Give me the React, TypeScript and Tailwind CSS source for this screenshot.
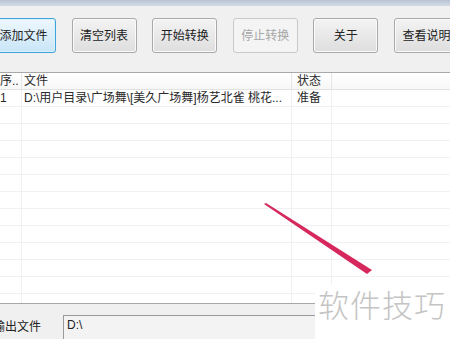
import React from "react";

const font = { fontFamily: '"Liberation Sans", "Noto Sans CJK SC", sans-serif' };

type ToolButtonProps = {
  label: string;
  variant?: "focus" | "normal" | "disabled";
};

function ToolButton({ label, variant = "normal" }: ToolButtonProps) {
  const base =
    "flex h-[35px] w-[65px] shrink-0 items-center justify-center rounded-[3px] border text-[12px]";
  if (variant === "focus") {
    return (
      <div className={`${base} border-[#3fa4d8] bg-gradient-to-b from-[#eef7fd] to-[#c9e6f8] text-[#222] shadow-[inset_0_0_0_1px_#d8f0fc]`}>
        {label}
      </div>
    );
  }
  if (variant === "disabled") {
    return (
      <div className={`${base} border-[#c9c9c9] bg-[#f4f4f4] text-[#a6a6a6]`}>{label}</div>
    );
  }
  return (
    <div className={`${base} border-[#a9a9a9] bg-gradient-to-b from-[#f3f3f3] to-[#dedede] text-[#222] shadow-[inset_0_0_0_1px_#fafafa]`}>
      {label}
    </div>
  );
}

const rows = Array.from({ length: 13 }, (_, i) => i);

export default function App() {
  return (
    <div className="relative flex h-[339px] w-[450px] flex-col overflow-hidden bg-[#f0f0f0]" style={font}>
      <div className="h-[6px] shrink-0 bg-gradient-to-b from-[#b8c4d3] to-[#d3dae4]" />

      {/* toolbar */}
      <div className="flex h-[66px] shrink-0 gap-[15.6px] pl-0 pt-[12px]">
        <div className="ml-[-9px] flex gap-[15.6px]">
          <ToolButton label="添加文件" variant="focus" />
          <ToolButton label="清空列表" />
          <ToolButton label="开始转换" />
          <ToolButton label="停止转换" variant="disabled" />
          <ToolButton label="关于" />
          <ToolButton label="查看说明" />
        </div>
      </div>

      {/* file list */}
      <div className="flex h-[231px] shrink-0 flex-col overflow-hidden border-t border-[#a8a8a8] bg-white text-[12px] text-[#2a2a2a]">
        <div className="grid h-[17px] shrink-0 grid-cols-[22px_270px_40px_1fr] border-b border-[#e2e2e2] bg-gradient-to-b from-white to-[#f7f7f7] leading-[16px]">
          <div className="overflow-hidden whitespace-nowrap border-r border-[#e6e6e6]">序..</div>
          <div className="border-r border-[#e6e6e6] pl-[2px]">文件</div>
          <div className="border-r border-[#e6e6e6] pl-[5px]">状态</div>
          <div />
        </div>
        {rows.map((i) => (
          <div
            key={i}
            className="grid h-[17px] shrink-0 grid-cols-[22px_270px_40px_1fr] border-b border-[#f1f1f1] leading-[16px]"
          >
            <div className="border-r border-[#f1f1f1]">{i === 0 ? "1" : ""}</div>
            <div className="overflow-hidden whitespace-nowrap border-r border-[#f1f1f1] pl-[2px]">
              {i === 0 ? "D:\\用户目录\\广场舞\\[美久广场舞]杨艺北雀 桃花..." : ""}
            </div>
            <div className="border-r border-[#f1f1f1] pl-[5px]">{i === 0 ? "准备" : ""}</div>
            <div />
          </div>
        ))}
      </div>

      {/* output */}
      <div className="flex flex-1 items-end border-t border-[#a8a8a8] bg-[#f0f0f0] text-[12px] text-[#222]">
        <div className="ml-[-7px] w-[70px] shrink-0 pb-[2px] leading-[20px]">输出文件</div>
        <div className="h-[24px] w-[260px] border-t border-l border-[#9a9a9a] bg-[#f3f3f3] pl-[3px] pt-[1px] text-[12px] leading-[16px]">
          D:\
        </div>
      </div>

      {/* arrow annotation */}
      <svg className="absolute left-0 top-0" width="450" height="339" viewBox="0 0 450 339">
        <polygon points="264,204 266,203 372,270 367,274" fill="#d6285c" />
      </svg>

      {/* watermark */}
      <div className="absolute bottom-0 right-0 flex h-[54px] w-[135px] items-start bg-white pl-[3px] pt-[1px]">
        <span
          className="text-[31px] leading-[36px] tracking-[1px] text-[#c4c4c4]"
          style={{ fontFamily: '"Noto Sans CJK SC", sans-serif', fontWeight: 300 }}
        >
          软件技巧
        </span>
      </div>
    </div>
  );
}
